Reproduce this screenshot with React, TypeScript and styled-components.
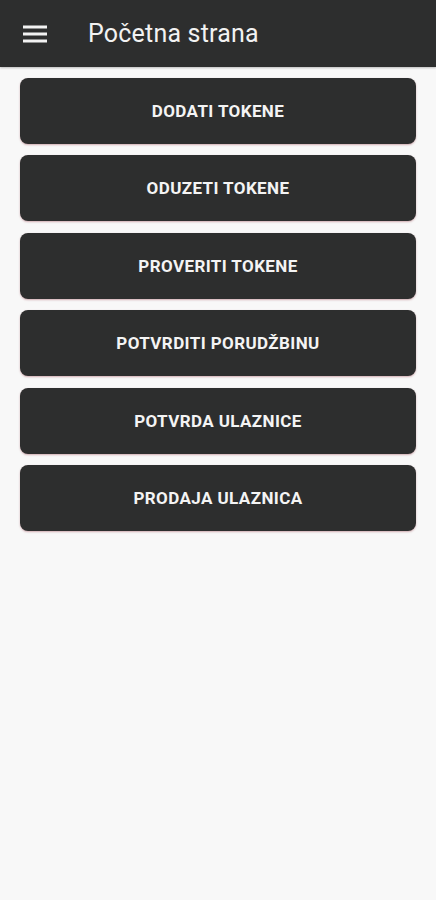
import React from "react";
import styled, { createGlobalStyle } from "styled-components";

const actions = [
  "DODATI TOKENE",
  "ODUZETI TOKENE",
  "PROVERITI TOKENE",
  "POTVRDITI PORUDŽBINU",
  "POTVRDA ULAZNICE",
  "PRODAJA ULAZNICA",
];

const App: React.FC = () => {
  return (
    <Page>
      <GlobalStyle />
      <TopBar>
        <MenuButton aria-label="menu">
          <svg width="24" height="20" viewBox="0 0 24 20">
            <path d="M0 1.5h24v3H0zM0 8.5h24v3H0zM0 15.5h24v3H0z" fill="#f2f2f2" />
          </svg>
        </MenuButton>
        <Title>Početna strana</Title>
      </TopBar>
      <ButtonList>
        {actions.map((label) => (
          <ActionButton key={label}>{label}</ActionButton>
        ))}
      </ButtonList>
    </Page>
  );
};

export default App;

const GlobalStyle = createGlobalStyle`
  body {
    margin: 0;
    background: #f8f8f8;
    font-family: Roboto, "Liberation Sans", sans-serif;
  }
`;

const Page = styled.div`
  min-height: 900px;
  background: #f8f8f8;
`;

const TopBar = styled.header`
  display: flex;
  align-items: center;
  height: 67px;
  padding-left: 23px;
  background: #2d2e2e;
  box-shadow: 0 1px 2px rgba(0, 0, 0, 0.25);
  box-sizing: border-box;
`;

const MenuButton = styled.div`
  display: flex;
  width: 24px;
  height: 20px;
  margin-right: 41px;
`;

const Title = styled.h1`
  margin: 0;
  font-size: 25px;
  font-weight: 400;
  color: #f2f2f2;
  letter-spacing: 0.2px;
`;

const ButtonList = styled.div`
  display: flex;
  flex-direction: column;
  gap: 11.4px;
  padding: 11px 20px 0;
`;

const ActionButton = styled.button`
  height: 66px;
  border: none;
  border-radius: 8px;
  background: #2d2e2e;
  color: #f4f4f4;
  font-family: Roboto, "Liberation Sans", sans-serif;
  font-size: 17px;
  font-weight: 700;
  letter-spacing: 0.4px;
  box-shadow: 0 1px 2px rgba(160, 80, 90, 0.45);
  cursor: pointer;
`;
